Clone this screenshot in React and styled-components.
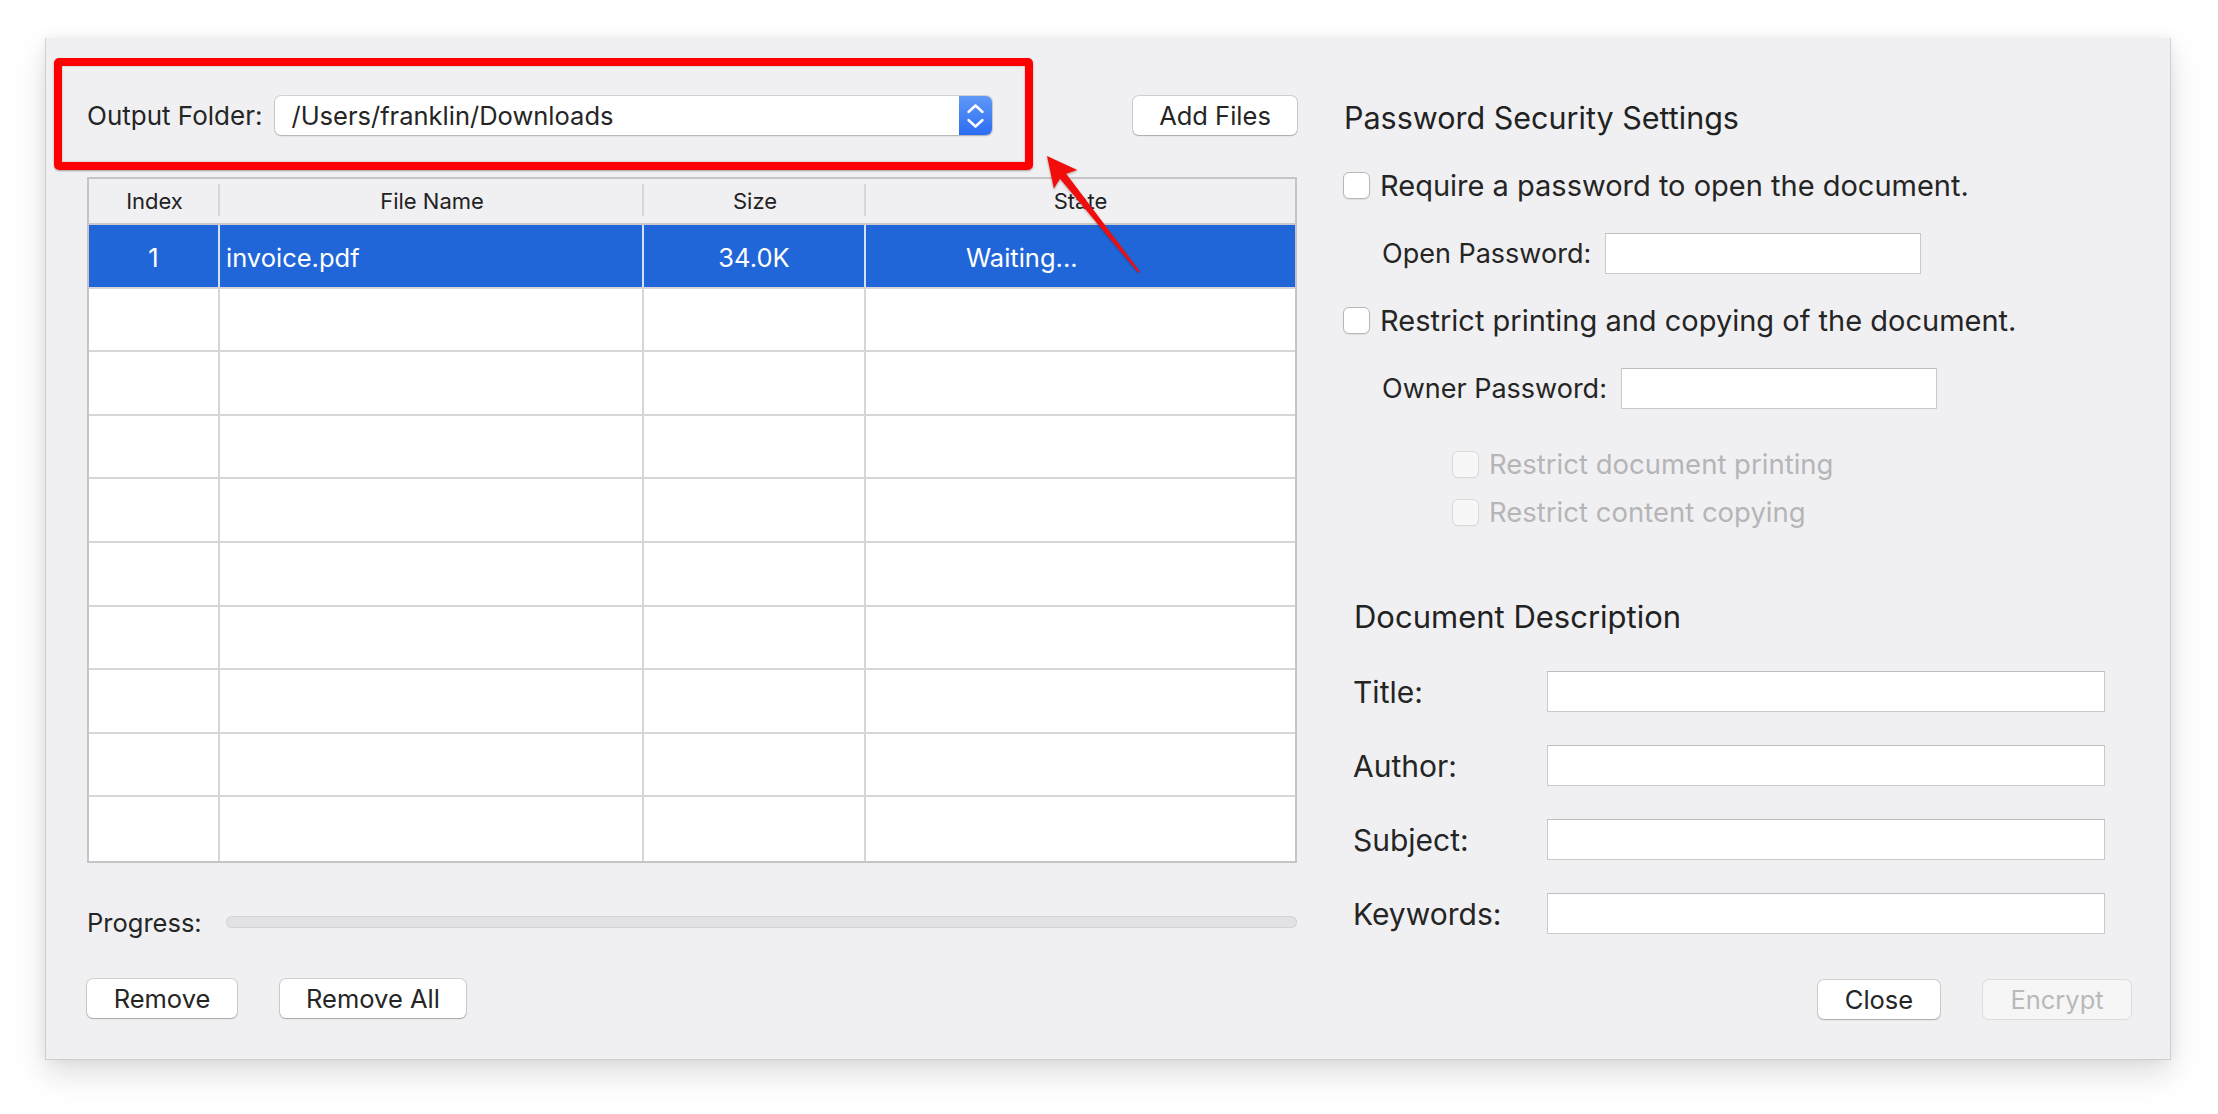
import { createGlobalStyle, styled } from 'styled-components';

const GlobalStyle = createGlobalStyle`
  html, body {
    margin: 0;
    padding: 0;
    background: #ffffff;
  }
  body {
    font-family: Inter, "Liberation Sans", Arial, sans-serif;
    color: #252525;
    -webkit-font-smoothing: antialiased;
  }
  * {
    box-sizing: border-box;
  }
`;

const COLUMNS = '131px 424px 222px 429px';

const Page = styled.div`
  position: relative;
  width: 2218px;
  height: 1114px;
  padding: 38px 0 0 45px;
  overflow: hidden;
`;

const Window = styled.div`
  width: 2126px;
  height: 1022px;
  background: #f0f0f2;
  border: 1px solid #cfcfd1;
  border-top: none;
  box-shadow: 0 14px 30px rgba(0, 0, 0, 0.13), 0 0 12px rgba(0, 0, 0, 0.06);
  display: grid;
  grid-template-columns: 1210px 788px;
  column-gap: 46px;
  padding: 0 39px 0 41px;
`;

const LeftPane = styled.div`
  display: flex;
  flex-direction: column;
  padding-top: 57px;
`;

const RightPane = styled.div`
  display: flex;
  flex-direction: column;
`;

const FolderBar = styled.div`
  display: flex;
  align-items: center;
  height: 40px;
`;

const FieldLabel = styled.span`
  font-size: ${(p) => p.$size || 27}px;
  white-space: nowrap;
`;

const PathSelect = styled.div`
  margin-left: 13px;
  width: 717px;
  height: 39px;
  display: flex;
  background: #ffffff;
  border-radius: 6px;
  overflow: hidden;
  box-shadow: 0 0 0 1px rgba(0, 0, 0, 0.12), 0 1px 2px rgba(0, 0, 0, 0.18);
`;

const PathText = styled.span`
  flex: 1;
  display: flex;
  align-items: center;
  padding-left: 16px;
  font-size: 25.5px;
`;

const Stepper = styled.span`
  width: 33px;
  display: flex;
  background: linear-gradient(#5f98f7, #2b6df3);
`;

const PushButton = styled.button`
  width: ${(p) => p.$w}px;
  height: 39px;
  padding: 0;
  border: none;
  border-radius: 6px;
  font-family: inherit;
  font-size: 25.5px;
  color: ${(p) => (p.disabled ? '#b9b9bb' : '#252525')};
  background: ${(p) => (p.disabled ? '#f6f6f7' : '#ffffff')};
  box-shadow: ${(p) =>
    p.disabled
      ? '0 0 0 1px rgba(0, 0, 0, 0.08)'
      : '0 0 0 1px rgba(0, 0, 0, 0.13), 0 1px 1.5px rgba(0, 0, 0, 0.2)'};
  margin-left: ${(p) => (p.$push ? 'auto' : '0')};
`;

const FileTable = styled.div`
  margin-top: 42px;
  height: 686px;
  display: grid;
  grid-template-rows: 46px repeat(10, 1fr);
  background: #ffffff;
  border: 2px solid #c5c5c7;
`;

const HeaderRow = styled.div`
  display: grid;
  grid-template-columns: ${COLUMNS};
  background: #f0f0f2;
  border-bottom: 2px solid #c9c9cb;
`;

const HeaderCell = styled.div`
  position: relative;
  display: flex;
  align-items: center;
  justify-content: center;
  font-size: 22px;
  color: #222;

  &:not(:last-child)::after {
    content: '';
    position: absolute;
    right: 0;
    top: 5px;
    bottom: 7px;
    width: 2px;
    background: #d7d7d9;
  }
`;

const BodyRow = styled.div`
  display: grid;
  grid-template-columns: ${COLUMNS};
  background: ${(p) => (p.$selected ? '#2166d9' : '#ffffff')};
  color: ${(p) => (p.$selected ? '#ffffff' : '#252525')};

  &:not(:last-child) {
    border-bottom: 2px solid #d6d6d8;
  }
`;

const Cell = styled.div`
  display: flex;
  align-items: center;
  justify-content: ${(p) => (p.$align === 'left' ? 'flex-start' : 'center')};
  padding-left: ${(p) => p.$pad || 0}px;
  padding-top: 3px;
  font-size: 25.5px;
  border-right: 2px solid ${(p) => (p.$selected ? 'rgba(255,255,255,0.8)' : '#d6d6d8')};

  &:last-child {
    border-right: none;
  }
`;

const ProgressRow = styled.div`
  margin-top: 39px;
  height: 40px;
  display: flex;
  align-items: center;
  gap: 24px;
`;

const ProgressTrack = styled.div`
  flex: 1;
  height: 12px;
  border-radius: 6px;
  background: #e2e2e4;
  box-shadow: inset 0 0 0 1px #d3d3d5;
`;

const ButtonBar = styled.div`
  margin-top: ${(p) => p.$top}px;
  display: flex;
  gap: 43px;
  justify-content: ${(p) => (p.$end ? 'flex-end' : 'flex-start')};
`;

const SectionTitle = styled.div`
  margin-top: ${(p) => p.$top}px;
  padding-left: ${(p) => p.$indent}px;
  font-size: ${(p) => p.$size}px;
  line-height: 40px;
  color: #222;
`;

const CheckRow = styled.label`
  margin-top: ${(p) => p.$top}px;
  padding-left: ${(p) => p.$indent || 0}px;
  height: 28px;
  display: flex;
  align-items: center;
  gap: 10px;
  font-size: ${(p) => (p.$disabled ? 27.5 : 29)}px;
  color: ${(p) => (p.$disabled ? '#b5b5b7' : '#252525')};
  white-space: nowrap;
`;

const CheckBox = styled.span`
  width: 27px;
  height: 27px;
  flex: none;
  border-radius: 6px;
  background: ${(p) => (p.$disabled ? '#f7f7f8' : '#ffffff')};
  border: 1px solid ${(p) => (p.$disabled ? '#d9d9db' : '#b7b7b9')};
  box-shadow: 0 1px 1px rgba(0, 0, 0, ${(p) => (p.$disabled ? 0.03 : 0.08)});
`;

const PasswordRow = styled.div`
  margin-top: ${(p) => p.$top}px;
  padding-left: 39px;
  height: 41px;
  display: flex;
  align-items: center;
  gap: 14px;
`;

const TextField = styled.input`
  width: ${(p) => p.$w}px;
  height: 41px;
  padding: 0 8px;
  background: #ffffff;
  border: 1px solid #cacacc;
  border-top-color: #bdbdbf;
  outline: none;
  font-family: inherit;
  font-size: 26px;
`;

const DescGrid = styled.div`
  margin-top: 34px;
  padding-left: 10px;
  display: grid;
  grid-template-columns: 194px 558px;
  grid-auto-rows: 41px;
  row-gap: 33px;
  align-items: center;
`;

const DescLabel = styled.span`
  font-size: 30px;
`;

const HighlightBox = styled.div`
  position: absolute;
  left: 54px;
  top: 58px;
  width: 979px;
  height: 112px;
  border: 8px solid #fe0000;
  border-radius: 5px;
  box-shadow: 0 1px 2px rgba(0, 0, 0, 0.35), inset 0 0 1.5px rgba(0, 0, 0, 0.45);
  pointer-events: none;
`;

const ArrowMark = styled.svg`
  position: absolute;
  left: 1030px;
  top: 140px;
  width: 130px;
  height: 150px;
  overflow: visible;
  pointer-events: none;
`;

const files = [{ index: 1, name: 'invoice.pdf', size: '34.0K', state: 'Waiting...' }];

export default function App() {
  const rows = Array.from({ length: 10 }, (_, i) => files[i] || null);

  return (
    <Page>
      <GlobalStyle />
      <Window>
        <LeftPane>
          <FolderBar>
            <FieldLabel $size={26}>Output Folder:</FieldLabel>
            <PathSelect>
              <PathText>/Users/franklin/Downloads</PathText>
              <Stepper>
                <svg width="33" height="39" viewBox="0 0 33 39">
                  <path
                    d="M9.5 16 L16.5 9.5 L23.5 16 M9.5 24 L16.5 30.5 L23.5 24"
                    fill="none"
                    stroke="#ffffff"
                    strokeWidth="2.4"
                    strokeLinecap="round"
                    strokeLinejoin="round"
                  />
                </svg>
              </Stepper>
            </PathSelect>
            <PushButton $w={164} $push>
              Add Files
            </PushButton>
          </FolderBar>

          <FileTable>
            <HeaderRow>
              <HeaderCell>Index</HeaderCell>
              <HeaderCell>File Name</HeaderCell>
              <HeaderCell>Size</HeaderCell>
              <HeaderCell>State</HeaderCell>
            </HeaderRow>
            {rows.map((file, i) => (
              <BodyRow key={i} $selected={!!file}>
                <Cell $selected={!!file}>{file && file.index}</Cell>
                <Cell $selected={!!file} $align="left" $pad={6}>
                  {file && file.name}
                </Cell>
                <Cell $selected={!!file}>{file && file.size}</Cell>
                <Cell $selected={!!file} $align="left" $pad={100}>
                  {file && file.state}
                </Cell>
              </BodyRow>
            ))}
          </FileTable>

          <ProgressRow>
            <FieldLabel $size={25.5}>Progress:</FieldLabel>
            <ProgressTrack />
          </ProgressRow>

          <ButtonBar $top={37}>
            <PushButton $w={150}>Remove</PushButton>
            <PushButton $w={186}>Remove All</PushButton>
          </ButtonBar>
        </LeftPane>

        <RightPane>
          <SectionTitle $top={60} $indent={1} $size={30.5}>
            Password Security Settings
          </SectionTitle>
          <CheckRow $top={33}>
            <CheckBox />
            Require a password to open the document.
          </CheckRow>
          <PasswordRow $top={34}>
            <FieldLabel>Open Password:</FieldLabel>
            <TextField type="password" $w={316} />
          </PasswordRow>
          <CheckRow $top={32}>
            <CheckBox />
            Restrict printing and copying of the document.
          </CheckRow>
          <PasswordRow $top={34}>
            <FieldLabel>Owner Password:</FieldLabel>
            <TextField type="password" $w={316} />
          </PasswordRow>
          <CheckRow $top={41} $indent={109} $disabled>
            <CheckBox $disabled />
            Restrict document printing
          </CheckRow>
          <CheckRow $top={20} $indent={109} $disabled>
            <CheckBox $disabled />
            Restrict content copying
          </CheckRow>

          <SectionTitle $top={71} $indent={11} $size={31}>
            Document Description
          </SectionTitle>
          <DescGrid>
            <DescLabel>Title:</DescLabel>
            <TextField $w={558} />
            <DescLabel>Author:</DescLabel>
            <TextField $w={558} />
            <DescLabel>Subject:</DescLabel>
            <TextField $w={558} />
            <DescLabel>Keywords:</DescLabel>
            <TextField $w={558} />
          </DescGrid>

          <ButtonBar $top={46} $end>
            <PushButton $w={122}>Close</PushButton>
            <PushButton $w={148} disabled>
              Encrypt
            </PushButton>
          </ButtonBar>
        </RightPane>
      </Window>

      <HighlightBox />
      <ArrowMark viewBox="0 0 130 150">
        <defs>
          <filter id="arrowShadow" x="-20%" y="-20%" width="140%" height="140%">
            <feDropShadow dx="0" dy="1" stdDeviation="1.2" floodColor="#000" floodOpacity="0.35" />
          </filter>
        </defs>
        <polygon
          points="17,16 47.3,30.1 36.2,33.8 109.8,131.4 108.2,132.6 30,38.8 23.9,48.7"
          fill="#f20f0f"
          filter="url(#arrowShadow)"
        />
      </ArrowMark>
    </Page>
  );
}
